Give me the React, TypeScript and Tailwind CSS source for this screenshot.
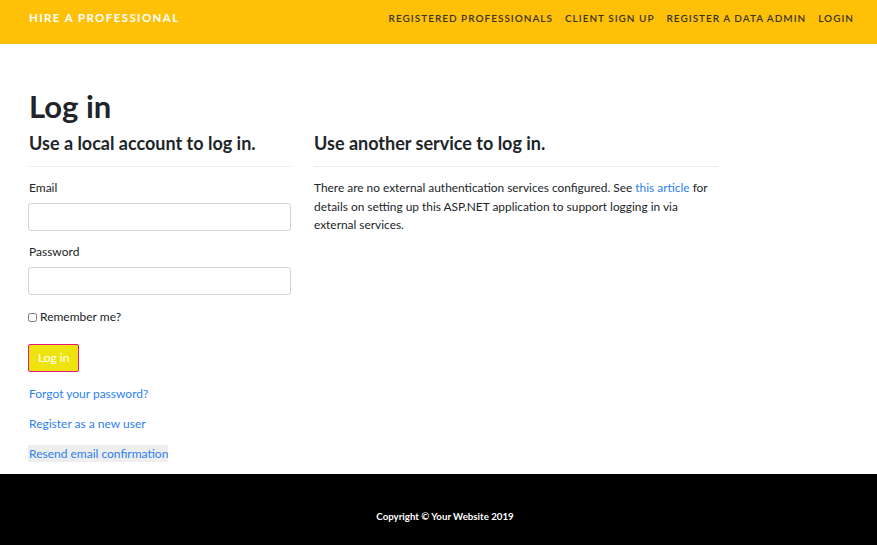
import React from "react";

export default function App() {
  return (
    <div className="min-h-[545px] flex flex-col bg-white" style={{ fontFamily: "Lato, 'Open Sans', sans-serif" }}>
      <nav className="h-[44px] bg-[#ffc107] flex items-start justify-between pl-[29px] pr-[23px] pt-[11px]">
        <div className="text-white font-bold text-[11.5px] tracking-[1.4px] leading-[14px]">HIRE A PROFESSIONAL</div>
        <div className="flex gap-[12px] text-[#3b3424] font-semibold text-[10px] tracking-[1px] leading-[14px]">
          <span>REGISTERED PROFESSIONALS</span>
          <span>CLIENT SIGN UP</span>
          <span>REGISTER A DATA ADMIN</span>
          <span>LOGIN</span>
        </div>
      </nav>
      <main className="flex-1 pl-[29px] pt-[44px] text-[#212529]">
        <h1 className="text-[31px] font-bold leading-[36px]">Log in</h1>
        <div className="flex gap-[23px] mt-[8px]">
          <section className="w-[262px]">
            <h2 className="text-[18px] font-bold leading-[22px]">Use a local account to log in.</h2>
            <hr className="mt-[12px] border-t border-[#e9ecef]" />
            <label className="block mt-[13px] text-[12px] leading-[16px]">Email</label>
            <input className="block mt-[7px] w-[263px] h-[28px] border border-[#ced4da] rounded-[3px] -ml-px" />
            <label className="block mt-[13px] text-[12px] leading-[16px]">Password</label>
            <input type="password" className="block mt-[7px] w-[263px] h-[28px] border border-[#ced4da] rounded-[3px] -ml-px" />
            <label className="flex items-center mt-[14px] text-[12px] leading-[16px]">
              <input type="checkbox" className="w-[9px] h-[9px] mr-[3px] -ml-px" />
              Remember me?
            </label>
            <button className="block mt-[19px] -ml-px h-[28px] px-[9px] bg-[#efe30f] border border-[#e8157a] rounded-[2px] text-white text-[12px]">Log in</button>
            <div className="mt-[13px] text-[12px] leading-[17px] text-[#2d7ff2]">Forgot your password?</div>
            <div className="mt-[13px] text-[12px] leading-[17px] text-[#2d7ff2]">Register as a new user</div>
            <div className="mt-[13px] -ml-px pl-px w-fit whitespace-nowrap bg-[#eeeeee] text-[12px] leading-[17px] text-[#2d7ff2]">Resend email confirmation</div>
          </section>
          <section className="w-[404px]">
            <h2 className="text-[18px] font-bold leading-[22px]">Use another service to log in.</h2>
            <hr className="mt-[12px] border-t border-[#e9ecef]" />
            <p className="mt-[12px] text-[11.9px] leading-[18.5px]">
              There are no external authentication services configured. See <span className="text-[#2d7ff2]">this article</span> for details on setting up this ASP.NET application to support logging in via external services.
            </p>
          </section>
        </div>
      </main>
      <footer className="h-[71px] mt-[12px] bg-black flex items-center justify-center pt-[14px] pl-[13px]">
        <span className="text-white text-[9.7px] font-bold">Copyright © Your Website 2019</span>
      </footer>
    </div>
  );
}
